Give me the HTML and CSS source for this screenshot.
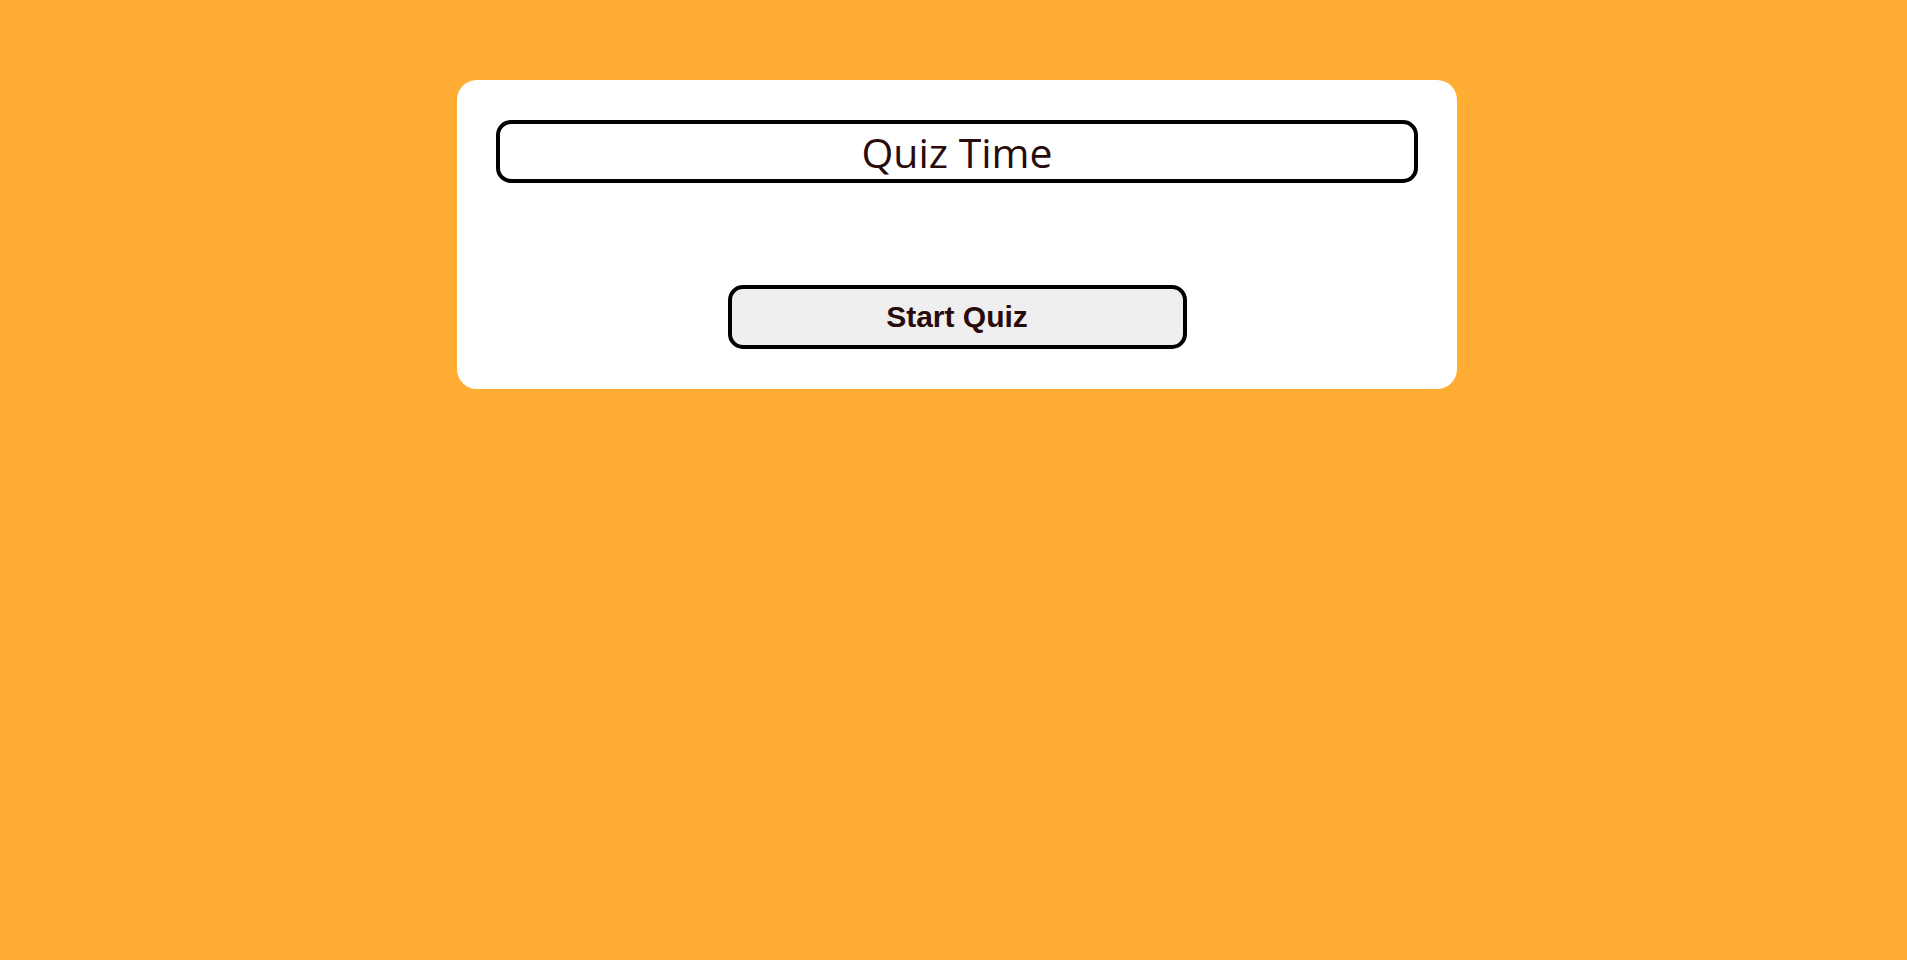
FILE: index.html
```html
<!DOCTYPE html>
<html lang="en">
<head>
<meta charset="utf-8">
<title>Quiz Time</title>
<link rel="stylesheet" href="styles.css">
</head>
<body>
<main class="card">
  <h1 class="title">Quiz Time</h1>
  <button class="start-btn" type="button">Start Quiz</button>
</main>
</body>
</html>
```
FILE: styles.css
```css
html, body {
  margin: 0;
  padding: 0;
}
body {
  background: #ffad33;
  min-height: 960px;
  padding: 80px 0 0 7px;
  box-sizing: border-box;
}
.card {
  width: 1000px;
  box-sizing: border-box;
  margin: 0 auto;
  background: #ffffff;
  border-radius: 20px;
  padding: 40px 39px 40px;
  display: flex;
  flex-direction: column;
  align-items: center;
}
.title {
  width: 100%;
  box-sizing: border-box;
  height: 63px;
  margin: 0;
  border: 4px solid #000;
  border-radius: 15px;
  display: flex;
  align-items: center;
  justify-content: center;
  padding-top: 1px;
  font-family: "Open Sans", "Noto Sans", sans-serif;
  font-weight: 500;
  font-size: 41px;
  color: #2a0b0b;
}
.start-btn {
  margin-top: 102px;
  width: 459px;
  height: 64px;
  box-sizing: border-box;
  border: 4px solid #000;
  border-radius: 15px;
  background: #efefef;
  font-family: "Liberation Sans", Arial, sans-serif;
  font-weight: 700;
  font-size: 30px;
  color: #2a0b0b;
  padding: 0;
}
```
